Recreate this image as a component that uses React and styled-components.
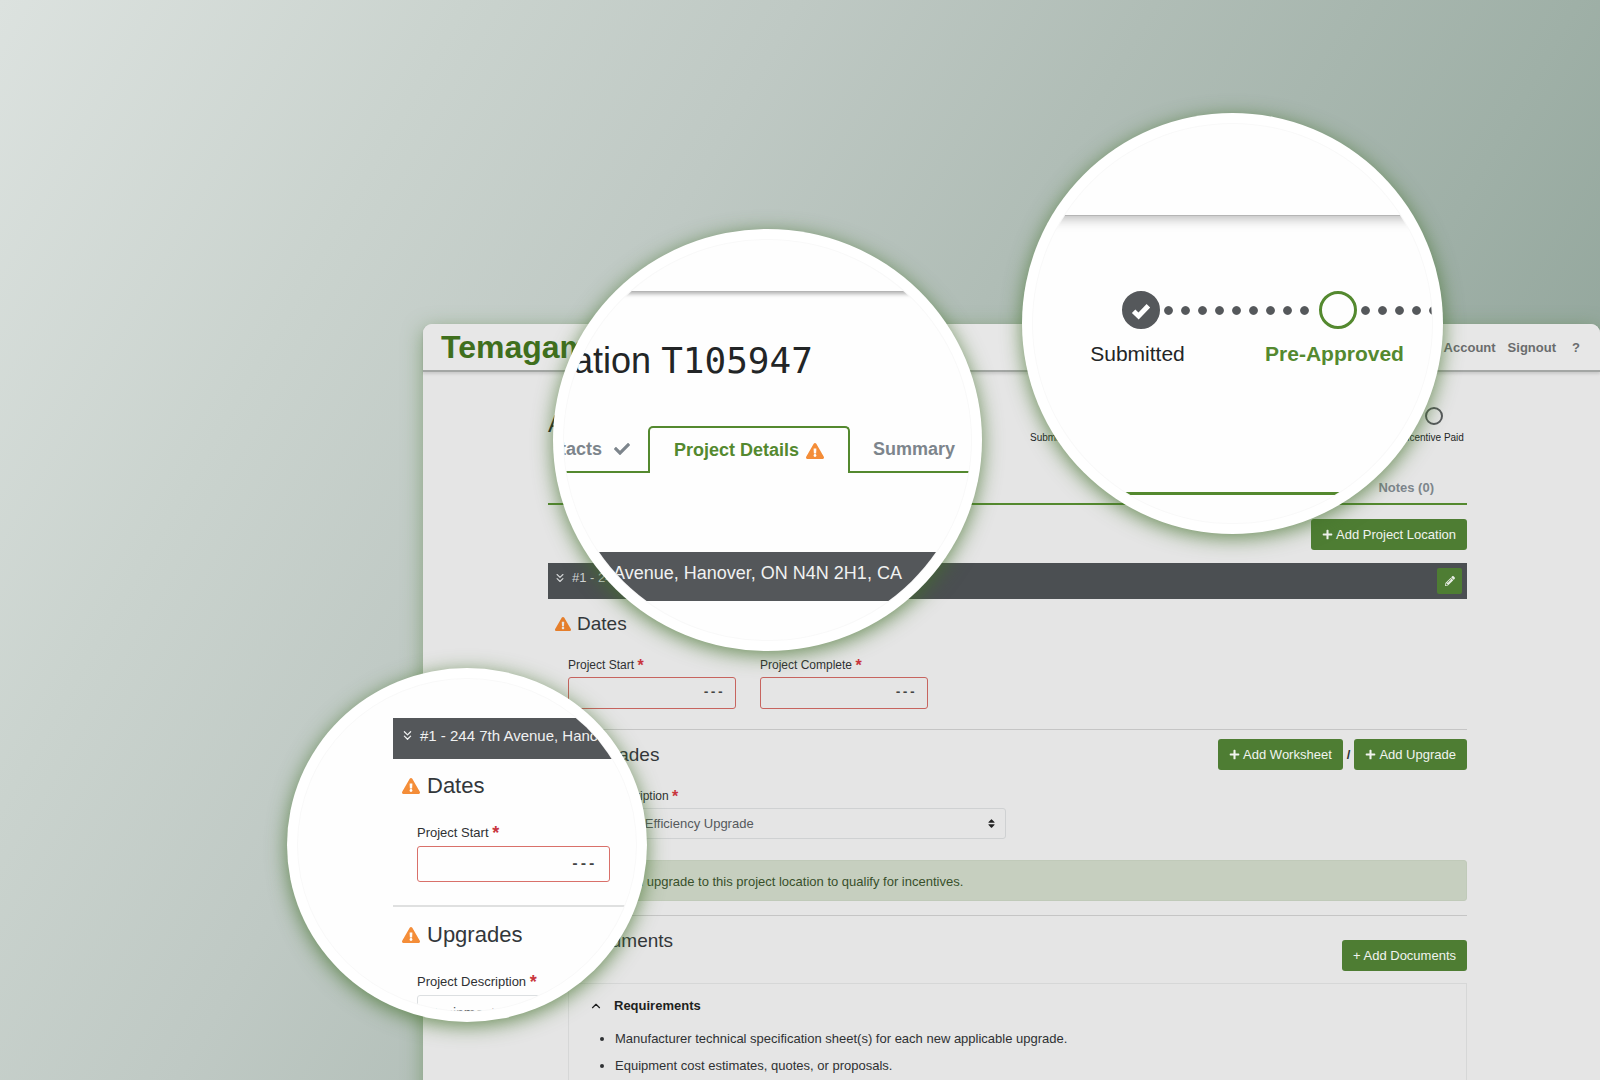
import React from "react";
import styled, { createGlobalStyle } from "styled-components";
import { FaPlus, FaExclamationTriangle, FaCheck, FaPencilAlt, FaSort } from "react-icons/fa";
import { ChevronsDown, ChevronUp } from "lucide-react";

const green = "#4e7d33";
const brightGreen = "#54892f";
const orange = "#e57e2b";
const slate = "#4b4f52";

const GlobalStyle = createGlobalStyle`
  *, *::before, *::after { box-sizing: border-box; }
  body { margin: 0; }
  body, button, input, select {
    font-family: "Liberation Sans", Arial, Helvetica, sans-serif;
  }
  h1, h2, h3, p, ul, ol { margin: 0; padding: 0; }
  svg { display: block; flex: none; }
`;

const Scene = styled.div`
  position: relative;
  height: 100vh;
  overflow: hidden;
  padding: 324px 0 0 423px;
  color: #2f3133;
  background: linear-gradient(120deg, #dce2df 0%, #cad3ce 21%, #bfc9c4 36%, #b0bdb6 52%, #9fb0a7 71%, #94a79d 82%, #90a399 100%);
`;

/* ---------- application window ---------- */

const Window = styled.div`
  min-height: 100%;
  border-radius: 9px 9px 0 0;
  background: #e5e5e5;
  box-shadow: 0 5px 20px rgba(84, 128, 62, 0.55);
`;

const Header = styled.header`
  display: flex;
  align-items: center;
  justify-content: space-between;
  height: 48px;
  padding: 0 20px 0 18px;
  border-bottom: 2px solid #a3a6a4;
  border-radius: 9px 9px 0 0;
  background: #e7e7e7;
  box-shadow: 0 2px 3px rgba(0, 0, 0, 0.12);
`;

const Brand = styled.a`
  color: #3f6f1d;
  font-size: 32px;
  font-weight: 700;
  line-height: 40px;
  text-decoration: none;
`;

const Nav = styled.nav`
  display: flex;
  gap: 12px;
  padding-top: 2px;
`;

const NavLink = styled.a`
  min-width: 12px;
  color: #6a6c6d;
  font-size: 13px;
  font-weight: 700;
  line-height: 16px;
  text-align: right;
  text-decoration: none;
`;

const Main = styled.main`
  padding: 35px 133px 0 125px;
`;

const TitleRow = styled.div`
  display: flex;
  align-items: flex-start;
  justify-content: space-between;
`;

const Title = styled.h1`
  font-size: ${(p) => (p.$large ? 36 : 24)}px;
  font-weight: 400;
  line-height: ${(p) => (p.$large ? 40 : 34)}px;
  white-space: nowrap;
  color: #222526;
`;

const Code = styled.span`
  font-family: "DejaVu Sans Mono", monospace;
`;

/* ---------- progress steps ---------- */

const Steps = styled.ol`
  display: flex;
  list-style: none;
  margin-right: ${(p) => (p.$large ? 0 : -14)}px;
`;

const Step = styled.li`
  position: relative;
  display: flex;
  flex: none;
  flex-direction: column;
  align-items: center;
  gap: ${(p) => (p.$large ? 13 : 5)}px;
  width: ${(p) => (p.$large ? 197 : 95)}px;

  &:not(:last-child)::after {
    content: "";
    position: absolute;
    top: ${(p) => (p.$large ? 11 : 5)}px;
    left: calc(50% + ${(p) => (p.$large ? 19 : 9)}px);
    width: ${(p) => (p.$large ? 153 : 72)}px;
    height: ${(p) => (p.$large ? 17 : 8)}px;
    background-image: radial-gradient(circle closest-side, #55585b 46%, transparent 56%);
    background-size: ${(p) => (p.$large ? "17px 17px" : "8px 8px")};
    background-repeat: repeat-x;
  }
`;

const StepNode = styled.span`
  display: flex;
  align-items: center;
  justify-content: center;
  width: ${(p) => (p.$large ? 38 : 18)}px;
  height: ${(p) => (p.$large ? 38 : 18)}px;
  border: ${(p) => (p.$large ? 3 : 2)}px solid ${(p) => (p.$state === "current" ? brightGreen : "#55585b")};
  border-radius: 50%;
  background: ${(p) => (p.$state === "done" ? "#55585b" : "transparent")};
  color: #fff;
`;

const StepLabel = styled.span`
  padding-right: ${(p) => (p.$large ? 6 : 2)}px;
  color: ${(p) => (p.$state === "current" ? brightGreen : "#222526")};
  font-size: ${(p) => (p.$large ? 21 : 10)}px;
  font-weight: ${(p) => (p.$state === "current" ? 700 : 400)};
  line-height: ${(p) => (p.$large ? 24 : 16)}px;
  white-space: nowrap;
`;

function Progress({ steps, large }) {
  return (
    <Steps $large={large}>
      {steps.map((s, i) => (
        <Step key={i} $large={large}>
          <StepNode $large={large} $state={s.state}>
            {s.state === "done" && (
              <svg width={large ? 20 : 10} height={large ? 20 : 10} viewBox="0 0 20 20" aria-hidden="true">
                <path d="M2.6 11.2 7.6 16 17.4 5.8" fill="none" stroke="#fff" strokeWidth="5" />
              </svg>
            )}
          </StepNode>
          <StepLabel $large={large} $state={s.state}>{s.label}</StepLabel>
        </Step>
      ))}
    </Steps>
  );
}

/* ---------- tabs ---------- */

const Tabs = styled.div`
  display: flex;
  margin-top: ${(p) => (p.$large ? 45 : 25)}px;
  padding-left: ${(p) => (p.$large ? 25 : 24)}px;
  border-bottom: 2px solid ${brightGreen};
`;

const tabPadding = (p) => {
  if (p.$end) return "0 31px 3px 14px";
  if (!p.$large) return "0 14px 3px";
  if (p.$active) return "0 24px";
  return p.$first ? "0 16px 3px 23px" : "0 21px 3px";
};

const Tab = styled.button`
  display: flex;
  align-items: center;
  gap: ${(p) => (p.$large ? (p.$active ? 7 : 12) : 6)}px;
  height: ${(p) => (p.$large ? 47 : 34)}px;
  margin: 0 0 -2px ${(p) => (p.$end ? "auto" : 0)};
  padding: ${tabPadding};
  border: 2px solid transparent;
  border-bottom: 0;
  border-radius: 5px 5px 0 0;
  background: transparent;
  color: #7d858c;
  font-size: ${(p) => (p.$large ? 18 : 13)}px;
  font-weight: 700;
  white-space: nowrap;

  ${(p) =>
    p.$active &&
    `
    border-color: ${brightGreen};
    background: ${p.$large ? "#fefefe" : "#e5e5e5"};
    color: ${brightGreen};
  `}
`;

const Warn = styled(FaExclamationTriangle)`
  color: ${(p) => (p.$bright ? "#f48d38" : orange)};
`;

/* ---------- shared parts ---------- */

const Actions = styled.div`
  display: flex;
  justify-content: flex-end;
  align-items: center;
  gap: 4px;
  margin-top: ${(p) => p.$top || 0}px;
  font-size: 13px;
  font-weight: 700;
`;

const Button = styled.button`
  display: flex;
  align-items: center;
  gap: 3px;
  height: 31px;
  padding: 0 11px;
  border: 0;
  border-radius: 3px;
  background: ${green};
  color: #f1f4ef;
  font-size: 13px;
  line-height: 16px;
  white-space: nowrap;
`;

const EditButton = styled.button`
  display: flex;
  align-items: center;
  justify-content: center;
  width: 25px;
  height: 26px;
  margin-left: auto;
  padding: 0;
  border: 0;
  border-radius: 2px;
  background: ${green};
  color: #e9eee6;
`;

const barSizes = {
  small: "height: 36px; margin-top: 13px; padding: 0 5px; font-size: 13px; line-height: 16px;",
  medium: "height: 41px; padding: 0 7px; font-size: 15px; line-height: 20px;",
  large: "height: 49px; margin-top: 79px; padding: 0 14px; font-size: 18px; line-height: 24px;",
};

const LocationBar = styled.div`
  display: flex;
  align-items: center;
  background: ${(p) => (p.$size === "small" ? slate : "#54575a")};
  color: ${(p) => (p.$size === "small" ? "#d4d6d7" : "#f0f1f1")};
  white-space: nowrap;
  ${(p) => barSizes[p.$size]}
`;

const BarLabel = styled.span`
  display: flex;
  align-items: center;
  gap: ${(p) => (p.$large ? 10 : 5)}px;
  padding-bottom: ${(p) => (p.$large ? 8 : 6)}px;
`;

const SectionTitle = styled.h2`
  display: flex;
  align-items: center;
  gap: ${(p) => (p.$large ? 7 : 6)}px;
  padding-left: ${(p) => (p.$large ? 9 : 7)}px;
  font-size: ${(p) => (p.$large ? 22 : 19)}px;
  font-weight: 400;
  line-height: 24px;
  color: #33373a;
`;

const SectionRow = styled.div`
  display: flex;
  align-items: ${(p) => (p.$align || "center")};
  justify-content: space-between;
  margin-top: ${(p) => p.$top}px;
`;

const Fields = styled.div`
  display: flex;
  gap: 24px;
  margin-top: ${(p) => p.$top}px;
  padding-left: ${(p) => (p.$large ? 24 : 20)}px;
`;

const Field = styled.div`
  display: flex;
  flex-direction: column;
  gap: ${(p) => (p.$large ? 5 : 4)}px;
  width: ${(p) => p.$width}px;
`;

const Label = styled.label`
  color: #2f3133;
  font-size: ${(p) => (p.$large ? 13 : 12)}px;
  line-height: 16px;
  white-space: nowrap;
`;

const Star = styled.b`
  color: #c9353d;
  font-size: ${(p) => (p.$large ? 18 : 16)}px;
  line-height: 10px;
  vertical-align: -2px;
`;

const DateInput = styled.input`
  width: 100%;
  height: ${(p) => (p.$large ? 36 : 32)}px;
  padding: 0 ${(p) => (p.$large ? 13 : 11)}px;
  border: 1px solid ${(p) => (p.$large ? "#d9706a" : "#c7645f")};
  border-radius: 3px;
  background: transparent;
  color: #444;
  font-family: "Liberation Mono", monospace;
  font-size: ${(p) => (p.$large ? 14 : 12)}px;
  font-weight: 700;
  text-align: right;
`;

const SelectWrap = styled.div`
  display: flex;
  align-items: center;
  height: ${(p) => (p.$large ? 36 : 31)}px;
  padding-right: 8px;
  border: 1px solid ${(p) => (p.$large ? "#dcdfe1" : "#cfd1d2")};
  border-radius: 3px;
`;

const Select = styled.select`
  flex: 1;
  height: 100%;
  padding: 0 10px;
  border: 0;
  background: transparent;
  color: #55595c;
  font-size: ${(p) => (p.$large ? 14 : 13)}px;
  appearance: none;
`;

const Rule = styled.hr`
  height: ${(p) => (p.$large ? 2 : 1)}px;
  margin: ${(p) => p.$top}px 0 0;
  border: 0;
  background: ${(p) => (p.$large ? "#dfe0e0" : "#c5c5c5")};
`;

const Alert = styled.p`
  height: 41px;
  margin-top: 21px;
  padding: 0 11px;
  border: 1px solid #c0cab9;
  border-radius: 3px;
  background: #c6cfbf;
  color: #38502b;
  font-size: 13px;
  line-height: 41px;
`;

const Requirements = styled.section`
  margin: 12px 0 0 20px;
  padding: 14px 20px 20px;
  border: 1px solid #d6d7d7;
`;

const Toggle = styled.button`
  display: flex;
  align-items: center;
  gap: 11px;
  padding: 0;
  border: 0;
  background: transparent;
  color: #1d1f20;
  font-size: 13px;
  font-weight: 700;
  line-height: 16px;
`;

const List = styled.ul`
  margin-top: 11px;
  padding-left: 26px;
  font-size: 13px;
  line-height: 27px;
  color: #2f3133;
`;

const StartField = ({ id, label, width, large }) => (
  <Field $width={width} $large={large}>
    <Label htmlFor={id} $large={large}>
      {label} <Star $large={large}>*</Star>
    </Label>
    <DateInput id={id} $large={large} type="text" defaultValue="---" />
  </Field>
);

const DescriptionField = ({ id, width, large }) => (
  <Field $width={width} $large={large}>
    <Label htmlFor={id} $large={large}>
      Project Description <Star $large={large}>*</Star>
    </Label>
    <SelectWrap $large={large}>
      <Select id={id} $large={large}>
        <option>Equipment Efficiency Upgrade</option>
      </Select>
      <FaSort size={11} color="#222" />
    </SelectWrap>
  </Field>
);

/* ---------- magnifier lenses ---------- */

const Lens = styled.section`
  position: absolute;
  left: ${(p) => p.$x}px;
  top: ${(p) => p.$y}px;
  width: ${(p) => p.$w}px;
  height: ${(p) => p.$h}px;
  padding: 11px;
  border-radius: 50%;
  background: #fff;
  box-shadow: 0 4px 20px rgba(66, 112, 42, 0.75);
`;

const LensView = styled.div`
  width: 100%;
  height: 100%;
  overflow: hidden;
  border-radius: 50%;
  background: #fefefe;
  box-shadow: 0 0 0 1px #f9f9f9;
`;

const LensHeader = styled.div`
  height: ${(p) => p.$height}px;
  border-bottom: 1px solid #b5b5b5;
  box-shadow: 0 2px ${(p) => p.$blur}px rgba(0, 0, 0, 0.3);
`;

const LensPage = styled.div`
  width: max-content;
  min-width: 150%;
  margin-left: ${(p) => p.$shift}px;
  padding-top: ${(p) => p.$top}px;
`;

const GreenLine = styled.div`
  height: 3px;
  margin-top: 126px;
  background: ${brightGreen};
`;

const steps = [
  { label: "Submitted", state: "done" },
  { label: "Pre-Approved", state: "current" },
  { label: "", state: "todo" },
  { label: "", state: "todo" },
  { label: "Incentive Paid", state: "todo" },
];

export default function App() {
  return (
    <Scene>
      <GlobalStyle />
      <Window>
        <Header>
          <Brand href="#home">Temagami</Brand>
          <Nav>
            <NavLink href="#account">Account</NavLink>
            <NavLink href="#signout">Signout</NavLink>
            <NavLink href="#help">?</NavLink>
          </Nav>
        </Header>
        <Main>
          <TitleRow>
            <Title>Application <Code>T105947</Code></Title>
            <Progress steps={steps} />
          </TitleRow>
          <Tabs>
            <Tab>Contacts <FaCheck size={12} /></Tab>
            <Tab $active>Project Details <Warn size={13} /></Tab>
            <Tab>Summary</Tab>
            <Tab $end>Notes (0)</Tab>
          </Tabs>
          <Actions $top={14}>
            <Button><FaPlus size={11} />Add Project Location</Button>
          </Actions>
          <LocationBar $size="small">
            <BarLabel><ChevronsDown size={14} />#1 - 244 7th Avenue, Hanover</BarLabel>
            <EditButton aria-label="Edit location"><FaPencilAlt size={10} /></EditButton>
          </LocationBar>

          <SectionRow $top={13}>
            <SectionTitle><Warn size={16} />Dates</SectionTitle>
          </SectionRow>
          <Fields $top={21}>
            <StartField id="start" label="Project Start" width={168} />
            <StartField id="complete" label="Project Complete" width={168} />
          </Fields>

          <Rule $top={20} />
          <SectionRow $top={9}>
            <SectionTitle><Warn size={16} />Upgrades</SectionTitle>
            <Actions>
              <Button><FaPlus size={11} />Add Worksheet</Button>
              <span>/</span>
              <Button><FaPlus size={11} />Add Upgrade</Button>
            </Actions>
          </SectionRow>
          <Fields $top={18}>
            <DescriptionField id="description" width={438} />
          </Fields>
          <Alert>Please add an upgrade to this project location to qualify for incentives.</Alert>

          <Rule $top={14} />
          <SectionRow $top={13} $align="flex-start">
            <SectionTitle><Warn size={16} />Documents</SectionTitle>
            <Actions $top={11}>
              <Button>+ Add Documents</Button>
            </Actions>
          </SectionRow>
          <Requirements>
            <Toggle><ChevronUp size={14} />Requirements</Toggle>
            <List>
              <li>Manufacturer technical specification sheet(s) for each new applicable upgrade.</li>
              <li>Equipment cost estimates, quotes, or proposals.</li>
            </List>
          </Requirements>
        </Main>
      </Window>

      <Lens $x={553} $y={229} $w={429} $h={422}>
        <LensView>
          <LensHeader $height={52} $blur={4} />
          <LensPage $shift={-89} $top={49}>
            <Title $large>Application <Code>T105947</Code></Title>
            <Tabs $large>
              <Tab $large $first>Contacts <FaCheck size={16} /></Tab>
              <Tab $large $active>Project Details <Warn $bright size={18} /></Tab>
              <Tab $large>Summary</Tab>
            </Tabs>
            <LocationBar $size="large">
              <BarLabel $large><ChevronsDown size={14} />#1 - 244 7th Avenue, Hanover, ON N4N 2H1, CA</BarLabel>
            </LocationBar>
          </LensPage>
        </LensView>
      </Lens>

      <Lens $x={1022} $y={113} $w={421} $h={421}>
        <LensView>
          <LensHeader $height={92} $blur={12} />
          <LensPage $shift={9} $top={75}>
            <Progress steps={steps.slice(0, 3)} large />
            <GreenLine />
          </LensPage>
        </LensView>
      </Lens>

      <Lens $x={287} $y={668} $w={360} $h={354}>
        <LensView>
          <LensPage $shift={95} $top={39}>
            <LocationBar $size="medium">
              <BarLabel><ChevronsDown size={15} />#1 - 244 7th Avenue, Hanover</BarLabel>
            </LocationBar>
            <SectionRow $top={15}>
              <SectionTitle $large><Warn $bright size={18} />Dates</SectionTitle>
            </SectionRow>
            <Fields $large $top={27}>
              <StartField id="lens-start" label="Project Start" width={193} large />
            </Fields>
            <Rule $large $top={23} />
            <SectionRow $top={16}>
              <SectionTitle $large><Warn $bright size={18} />Upgrades</SectionTitle>
            </SectionRow>
            <Fields $large $top={27}>
              <DescriptionField id="lens-description" width={438} large />
            </Fields>
          </LensPage>
        </LensView>
      </Lens>
    </Scene>
  );
}
